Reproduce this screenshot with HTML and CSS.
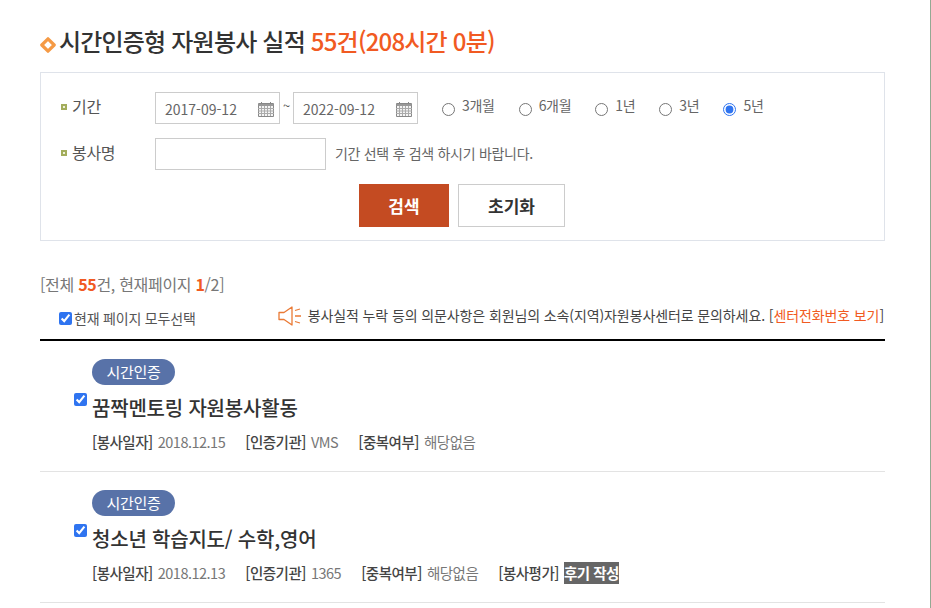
FILE: index.html
```html
<!DOCTYPE html>
<html lang="ko">
<head>
	<meta charset="utf-8">
	<title>시간인증형 자원봉사 실적</title>
	<link rel="stylesheet" href="styles.css">
</head>
<body>
	<div class="wrap">
		<h2 class="page-title">
			<svg class="title-icon" width="16" height="16" viewBox="0 0 16 16"><path d="M8 1.8 14.2 8 8 14.2 1.8 8Z" fill="#fff" stroke="#f59a45" stroke-width="3.2" stroke-linejoin="round"/></svg>시간인증형 자원봉사 실적 <em>55건(208시간 0분)</em>
		</h2>

		<form class="search-box">
			<div class="search-row">
				<label class="search-label">기간</label>
				<span class="date-field">2017-09-12
					<svg class="cal" width="16" height="15" viewBox="0 0 16 15"><path d="M3.5 0v3M12.5 0v3" stroke="#888" fill="none"/><path d="M.5 1.5h15v13H.5z" fill="#f4f4f4" stroke="#888"/><path d="M.5 2h15v2H.5z" fill="#999"/><path d="M0 6.5h16M0 9h16M0 11.5h16M3.5 4v10M6.5 4v10M9.5 4v10M12.5 4v10" stroke="#aaa" fill="none"/></svg>
				</span>
				<span class="date-sep">~</span>
				<span class="date-field">2022-09-12
					<svg class="cal" width="16" height="15" viewBox="0 0 16 15"><path d="M3.5 0v3M12.5 0v3" stroke="#888" fill="none"/><path d="M.5 1.5h15v13H.5z" fill="#f4f4f4" stroke="#888"/><path d="M.5 2h15v2H.5z" fill="#999"/><path d="M0 6.5h16M0 9h16M0 11.5h16M3.5 4v10M6.5 4v10M9.5 4v10M12.5 4v10" stroke="#aaa" fill="none"/></svg>
				</span>
				<div class="period">
					<label><input type="radio" name="period"><span>3개월</span></label>
					<label><input type="radio" name="period"><span>6개월</span></label>
					<label><input type="radio" name="period"><span>1년</span></label>
					<label><input type="radio" name="period"><span>3년</span></label>
					<label><input type="radio" name="period" checked><span>5년</span></label>
				</div>
			</div>
			<div class="search-row name-row">
				<label class="search-label">봉사명</label>
				<input type="text" class="name-input">
				<span class="search-hint">기간 선택 후 검색 하시기 바랍니다.</span>
			</div>
			<div class="search-buttons">
				<button type="button" class="btn btn-search">검색</button>
				<button type="button" class="btn btn-reset">초기화</button>
			</div>
		</form>

		<p class="result-count">[전체 <strong>55</strong>건, 현재페이지 <strong>1</strong>/2]</p>

		<div class="list-head">
			<label class="select-all"><input type="checkbox" checked>현재 페이지 모두선택</label>
			<p class="notice">
				<svg class="notice-icon" width="24" height="20" viewBox="0 0 24 20"><path d="M1 6.5h5L14 1v18L6 13.5H1Z" fill="#fff" stroke="#ea7a35" stroke-width="1.3" stroke-linejoin="round"/><path d="M17 4.5l5-1.5M17 10h6M17 15.5l5 1.5" stroke="#ea7a35" stroke-width="1.3" fill="none"/></svg>봉사실적 누락 등의 의문사항은 회원님의 소속(지역)자원봉사센터로 문의하세요. [<a href="#">센터전화번호 보기</a>]
			</p>
		</div>

		<ul class="record-list">
			<li class="record">
				<input type="checkbox" class="record-check" checked>
				<span class="badge">시간인증</span>
				<h3 class="record-title">꿈짝멘토링 자원봉사활동</h3>
				<p class="record-meta">
					<span><b>[봉사일자]</b> 2018.12.15</span>
					<span><b>[인증기관]</b> VMS</span>
					<span><b>[중복여부]</b> 해당없음</span>
				</p>
			</li>
			<li class="record">
				<input type="checkbox" class="record-check" checked>
				<span class="badge">시간인증</span>
				<h3 class="record-title">청소년 학습지도/ 수학,영어</h3>
				<p class="record-meta">
					<span><b>[봉사일자]</b> 2018.12.13</span>
					<span><b>[인증기관]</b> 1365</span>
					<span><b>[중복여부]</b> 해당없음</span>
					<span><b>[봉사평가]</b> <a href="#" class="review">후기 작성</a></span>
				</p>
			</li>
		</ul>
	</div>
</body>
</html>
```

FILE: styles.css
```css
* {
	box-sizing: border-box;
}
html, body {
	margin: 0;
	height: 608px;
	overflow: hidden;
}
body {
	background-color: #fff;
	border-right: 1px solid #93a993;
	color: #555;
	font-family: "Noto Sans CJK KR", "Noto Sans", sans-serif;
	font-size: 14px;
	letter-spacing: -0.3px;
	accent-color: #2f74f0;
}
p, h2, h3, ul {
	margin: 0;
	padding: 0;
}
.wrap {
	width: 845px;
	margin-left: 40px;
	padding-top: 23px;
}
.page-title {
	height: 36px;
	font-size: 24px;
	font-weight: 500;
	line-height: 36px;
	letter-spacing: -0.8px;
	color: #333;
}
.page-title em {
	font-style: normal;
	color: #f15a22;
}
.title-icon {
	margin-right: 3px;
	vertical-align: -2px;
}
.search-box {
	height: 169px;
	margin-top: 13px;
	padding: 19px 0 0 20px;
	border: 1px solid #dfe3ea;
}
.search-row {
	display: flex;
	align-items: center;
	height: 32px;
}
.name-row {
	margin-top: 14px;
}
.search-label {
	position: relative;
	width: 94px;
	padding-left: 11px;
	margin-top: -5px;
	font-size: 16px;
	color: #555;
}
.search-label::before {
	content: "";
	box-sizing: border-box;
	position: absolute;
	left: 0;
	top: 10px;
	width: 6px;
	height: 6px;
	border: 2px solid #a3ad5c;
	background-color: #eef0d8;
}
.date-field {
	display: flex;
	align-items: center;
	justify-content: space-between;
	width: 125px;
	height: 32px;
	padding: 1px 5px 0 9px;
	border: 1px solid #ccc;
	color: #666;
	font-size: 14px;
	letter-spacing: 0;
}
.cal {
	margin-top: 2px;
}
.date-sep {
	width: 13px;
	margin-top: -6px;
	text-align: center;
	font-size: 13px;
}
.period {
	display: flex;
	margin-left: 24px;
}
.period label {
	display: flex;
	align-items: center;
	margin-right: 24px;
	font-size: 14px;
	color: #666;
}
.period span {
	margin-top: -6px;
}
.period input {
	width: 13px;
	height: 13px;
	margin: 2px 7px 0 0;
}
.name-input {
	width: 171px;
	height: 32px;
	border: 1px solid #ccc;
}
.search-hint {
	margin-left: 9px;
	margin-top: -3px;
	font-size: 14px;
	color: #666;
}
.search-buttons {
	display: flex;
	gap: 9px;
	margin-top: 14px;
	margin-left: 298px;
}
.btn {
	height: 43px;
	border: 1px solid #ccc;
	background-color: #fff;
	color: #333;
	font-family: inherit;
	font-size: 17px;
	font-weight: 700;
	padding: 0;
}
.btn-search {
	width: 90px;
	border-color: #c44b22;
	background-color: #c44b22;
	color: #fff;
}
.btn-reset {
	width: 107px;
}
.result-count {
	margin-top: 32px;
	font-size: 16px;
	line-height: 22px;
	color: #777;
}
.result-count strong {
	color: #f15a22;
}
.list-head {
	display: flex;
	justify-content: space-between;
	align-items: center;
	height: 46px;
	padding-right: 1px;
	border-bottom: 2px solid #000;
	font-size: 14px;
}
.select-all {
	display: flex;
	align-items: center;
	padding-left: 19px;
	color: #555;
	letter-spacing: -0.2px;
	margin-top: 1px;
}
.select-all input {
	width: 13px;
	height: 13px;
	margin: 2px 2px 0 0;
}
.notice {
	color: #444;
	letter-spacing: -0.11px;
	margin-top: -3px;
}
.notice a {
	color: #f15a22;
	text-decoration: none;
}
.notice-icon {
	margin-right: 6px;
	vertical-align: -5px;
}
.record-list {
	list-style: none;
}
.record {
	position: relative;
	height: 131px;
	padding: 18px 0 0 52px;
	border-bottom: 1px solid #e3e3e3;
}
.record-check {
	position: absolute;
	left: 34px;
	top: 52px;
	width: 13px;
	height: 13px;
	margin: 0;
}
.badge {
	display: block;
	width: 83px;
	height: 26px;
	border-radius: 13px;
	background-color: #5872a8;
	color: #fff;
	font-size: 15px;
	line-height: 25px;
	text-align: center;
}
.record-title {
	margin-top: 6px;
	font-size: 20px;
	font-weight: 500;
	line-height: 34px;
	letter-spacing: -0.2px;
	color: #333;
}
.record-meta {
	display: flex;
	gap: 20px;
	margin-top: 6px;
	font-size: 14.5px;
	line-height: 22px;
	letter-spacing: -0.5px;
	word-spacing: 1.5px;
	color: #777;
}
.record-meta b {
	font-weight: 500;
	color: #444;
}
.review {
	display: inline-block;
	background-color: #666;
	color: #fff;
	font-weight: 700;
	word-spacing: 0;
	text-decoration: none;
}
```
